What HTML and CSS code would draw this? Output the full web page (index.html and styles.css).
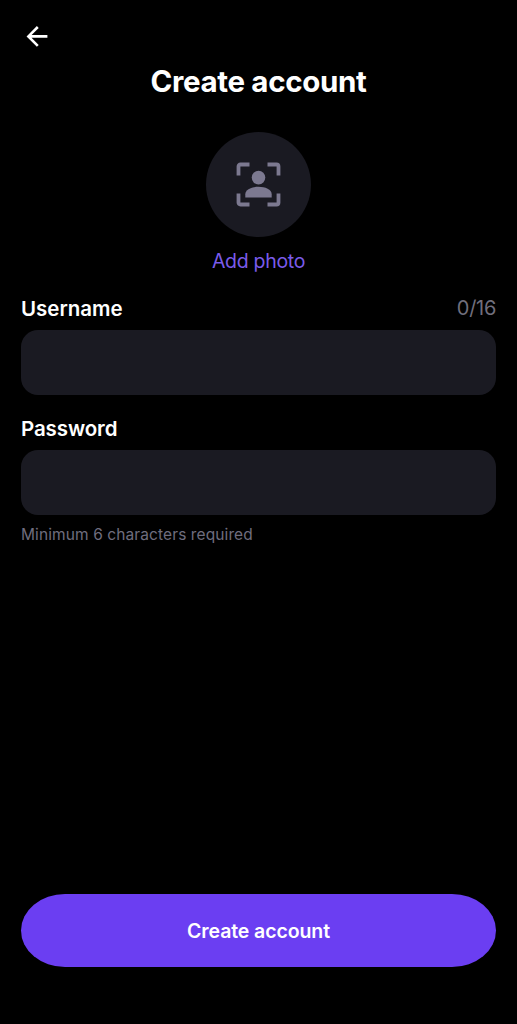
FILE: index.html
```html
<!DOCTYPE html>
<html lang="en">
<head>
<meta charset="utf-8">
<title>Create account</title>
<link rel="stylesheet" href="styles.css">
</head>
<body>
<main class="screen">
  <button class="back" aria-label="Back">
    <svg width="22" height="22" viewBox="0 0 22 22" fill="none" stroke="#fff" stroke-width="2.6"><path d="M21.400 11.400H2.500M11.800 2L2.400 11.400l9.400 9.400"/></svg>
  </button>
  <h1 class="title">Create account</h1>
  <div class="photo">
    <div class="avatar">
      <svg width="45" height="45" viewBox="0 0 45 45">
        <path d="M2.500 13.500V4.500q0-2 2-2h9M31.500 2.500h9q2 0 2 2v9M42.500 31.500v9q0 2-2 2h-9M13.500 42.500h-9q-2 0-2-2v-9" fill="none" stroke="#7c7990" stroke-width="3.800"/>
        <circle cx="22.500" cy="15.600" r="6.800" fill="#7c7990"/>
        <path d="M9.300 35.500v-3.300c0-4.700 6.500-7.400 13.200-7.400s13.200 2.700 13.200 7.400v3.300z" fill="#7c7990"/>
      </svg>
    </div>
    <span class="add">Add photo</span>
  </div>
  <div class="field username">
    <div class="row"><label class="label user-label" for="u">Username</label><span class="count">0/16</span></div>
    <input class="input" id="u">
  </div>
  <div class="field password">
    <label class="label" for="p">Password</label>
    <input class="input" id="p" type="password">
    <p class="hint">Minimum 6 characters required</p>
  </div>
  <button class="submit"><span class="submit-text">Create account</span></button>
</main>
</body>
</html>
```
FILE: styles.css
```css
* { box-sizing: border-box; }
body { margin: 0; background: #000; font-family: Inter, "Liberation Sans", sans-serif; }
.screen { height: 1024px; display: flex; flex-direction: column; padding: 25px 21px 57px; color: #fff; }
.back { width: 22px; height: 22px; margin-left: 5px; padding: 0; border: 0; background: none; display: flex; }
.title { margin: 16px 0 0; text-align: center; font-size: 29.5px; line-height: 36px; font-weight: 700; letter-spacing: -0.34px; }
.photo { display: flex; flex-direction: column; align-items: center; margin-top: 33px; }
.avatar { width: 105px; height: 105px; border-radius: 50%; background: #1a1a22; display: flex; align-items: center; justify-content: center; }
.add { margin-top: 12px; font-size: 19.5px; line-height: 24px; letter-spacing: -0.3px; color: #7a5bea; }
.field { display: flex; flex-direction: column; }
.username { margin-top: 22px; }
.password { margin-top: 20px; }
.row { display: flex; justify-content: space-between; }
.label { font-size: 20.5px; line-height: 27px; font-weight: 600; letter-spacing: -0.1px; }
.user-label { letter-spacing: 0; }
.count { font-size: 20px; line-height: 26px; letter-spacing: -0.3px; color: #706e7d; }
.input { width: 100%; height: 65px; margin-top: 8px; padding: 0 18px; border: 0; border-radius: 17px; background: #1a1a22; color: #fff; font: inherit; font-size: 20px; }
.hint { margin: 9px 0 0; font-size: 15.5px; line-height: 22px; letter-spacing: 0.1px; color: #6f6d7e; }
.submit { width: 100%; height: 73px; margin-top: auto; padding: 1px 0 0; border: 0; border-radius: 44px / 36.5px; background: #6b3ef2; color: #fff; font-family: inherit; font-size: 19.5px; font-weight: 600; letter-spacing: -0.1px; }
```
